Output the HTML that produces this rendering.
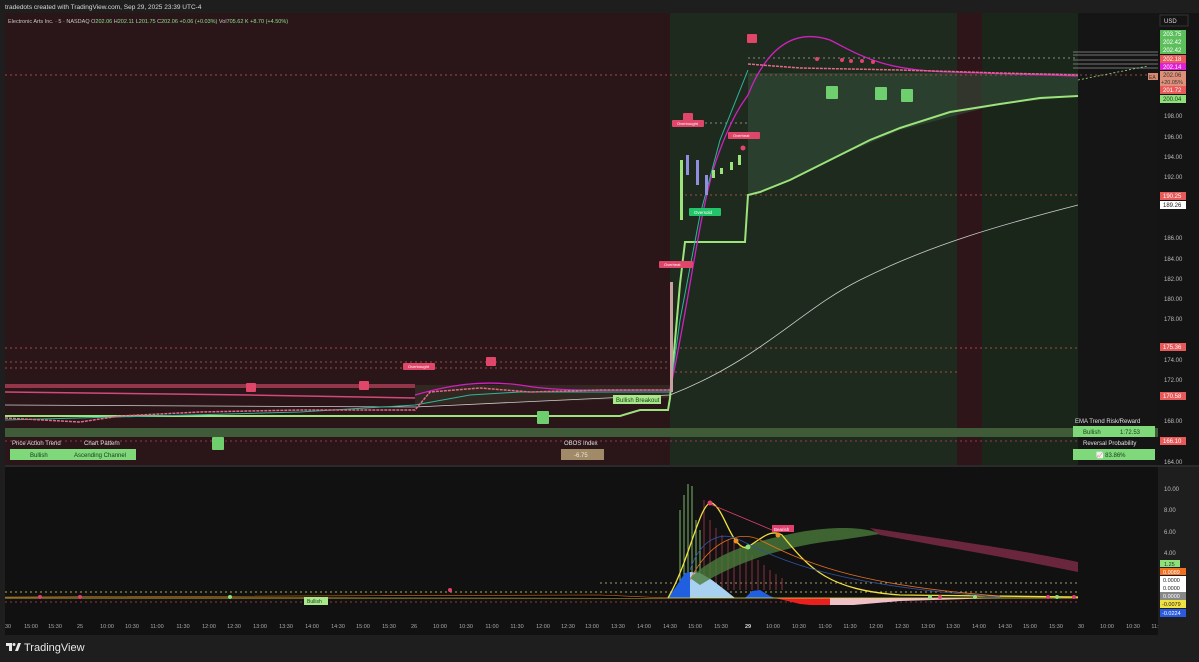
<!DOCTYPE html>
<html><head><meta charset="utf-8"><style>
html,body{margin:0;padding:0;background:#1e1e1e;width:1199px;height:662px;overflow:hidden;font-family:"Liberation Sans",sans-serif}
svg{display:block}
</style></head><body>
<svg width="1199" height="662" viewBox="0 0 1199 662" xmlns="http://www.w3.org/2000/svg" font-family="Liberation Sans, sans-serif">
<rect width="1199" height="662" fill="#1e1e1e"/>
<text x="5" y="9" font-size="6.5" fill="#d8d8d8">tradedots created with TradingView.com, Sep 29, 2025 23:39 UTC-4</text>
<rect x="5" y="13" width="1153" height="452" fill="#141414"/>
<rect x="5" y="13" width="665" height="452" fill="#2a1518"/>
<rect x="670" y="13" width="287" height="452" fill="#1e2a1e"/>
<rect x="957" y="13" width="25" height="452" fill="#2e1519"/>
<rect x="982" y="13" width="96" height="452" fill="#1b261b"/>
<rect x="1078" y="13" width="80" height="452" fill="#151515"/>
<path d="M748 73 L1078 73 L1078 96 L1000 104 L900 130 L830 160 L790 180 L760 193 L748 195 Z" fill="#34503a" opacity="0.55"/>
<path d="M415 385 L670 385 L670 398 L415 405 Z" fill="#3a3a2a" opacity="0.5"/>
<text x="8" y="23" font-size="5.5" fill="#c8c8c8">Electronic Arts Inc. · 5 · NASDAQ <tspan fill="#c8c8c8">O</tspan><tspan fill="#8fe08f">202.06</tspan> H<tspan fill="#8fe08f">202.11</tspan> L<tspan fill="#8fe08f">201.75</tspan> C<tspan fill="#8fe08f">202.06</tspan> <tspan fill="#8fe08f">+0.06 (+0.03%)</tspan> Vol<tspan fill="#8fe08f">705.62 K</tspan> <tspan fill="#8fe08f">+8.70 (+4.50%)</tspan></text>
<g stroke-dasharray="2 3" stroke-width="0.8">
<line x1="5" y1="75" x2="1158" y2="75" stroke="#c06050"/>
<line x1="5" y1="348" x2="1078" y2="348" stroke="#c06050"/>
<line x1="5" y1="362" x2="670" y2="362" stroke="#c06050"/>
<line x1="5" y1="368" x2="670" y2="368" stroke="#c06050"/>
<line x1="670" y1="372" x2="957" y2="372" stroke="#c06050"/>
<line x1="685" y1="195" x2="1078" y2="195" stroke="#c06050"/>
<line x1="5" y1="441" x2="1078" y2="441" stroke="#c04060"/>
<line x1="685" y1="123" x2="748" y2="123" stroke="#aaa"/>
<line x1="748" y1="58" x2="1078" y2="58" stroke="#aaa"/>
</g>
<rect x="5" y="428" width="1153" height="9" fill="#3f5b38"/>
<rect x="5" y="384" width="410" height="4" fill="#c24460" opacity="0.7"/>
<path d="M5 392 L250 395 L415 398" stroke="#d04a7a" stroke-width="1.5" fill="none"/>
<path d="M5 416 L415 416 L620 416 L640 410 L668 410 L670 398 L680 284 L685 242 L745 242 L748 195 L760 192 L790 180 L830 160 L870 140 L900 128 L950 112 L1000 104 L1040 98 L1078 96" stroke="#9be37a" stroke-width="2" fill="none"/>
<path d="M5 405 L415 407 L670 395 C760 360 800 310 860 280 C930 245 1000 225 1078 205" stroke="#cfcfcf" stroke-width="0.8" fill="none"/>
<path d="M415 395 C450 385 480 380 520 385 C560 392 600 390 670 390 C690 300 700 200 720 150 C735 110 745 100 748 95 C770 40 800 30 830 40 C860 55 880 70 950 72 L1078 76" stroke="#d020c0" stroke-width="1.3" fill="none"/>
<path d="M5 420 L300 412 L415 405 L470 395 L520 392 L670 392 L680 320 L700 215 L720 140 L748 70" stroke="#2fb59a" stroke-width="1" fill="none"/>
<path d="M5 418 L80 422 L120 416 L200 412 L300 410 L415 410 L430 392 L480 388 L530 392 L600 390 L670 390" stroke="#e36a8a" stroke-width="1.5" fill="none" stroke-dasharray="3 1"/>
<path d="M748 64 L800 68 L900 70 L1000 73 L1078 75" stroke="#e36a8a" stroke-width="1.5" fill="none" stroke-dasharray="3 1"/>
<rect x="670" y="282" width="3" height="110" fill="#c9a0a0"/>
<rect x="680" y="160" width="3" height="60" fill="#9be37a"/>
<rect x="686" y="155" width="3" height="20" fill="#8f8fe0"/>
<rect x="696" y="160" width="3" height="25" fill="#8f8fe0"/>
<rect x="705" y="175" width="3" height="20" fill="#8f8fe0"/>
<rect x="712" y="170" width="3" height="8" fill="#9be37a"/><rect x="720" y="168" width="3" height="6" fill="#9be37a"/><rect x="730" y="162" width="3" height="8" fill="#9be37a"/><rect x="738" y="155" width="3" height="10" fill="#9be37a"/>
<g fill="#e0456a">
<rect x="246" y="383" width="10" height="9" rx="1"/><rect x="359" y="381" width="10" height="9" rx="1"/><rect x="486" y="357" width="10" height="9" rx="1"/><rect x="683" y="113" width="10" height="9" rx="1"/><rect x="747" y="34" width="10" height="9" rx="1"/>
<rect x="403" y="363" width="32" height="7" rx="1"/><rect x="672" y="120" width="32" height="7" rx="1"/><rect x="728" y="132" width="32" height="7" rx="1"/><rect x="659" y="261" width="34" height="7" rx="1"/>
<circle cx="743" cy="148" r="2.5"/><circle cx="817" cy="59" r="2"/><circle cx="842" cy="60" r="2"/><circle cx="851" cy="61" r="2"/><circle cx="862" cy="61" r="2"/><circle cx="873" cy="62" r="2"/>
</g>
<g font-size="4" fill="#fff"><text x="408" y="368">Overbought</text><text x="677" y="125">Overbought</text><text x="733" y="137">Overheat</text><text x="664" y="266">Overheat</text></g>
<g fill="#6fcf6f">
<rect x="826" y="86" width="12" height="13" rx="1"/><rect x="875" y="87" width="12" height="13" rx="1"/><rect x="901" y="89" width="12" height="13" rx="1"/><rect x="537" y="411" width="12" height="13" rx="1"/><rect x="212" y="437" width="12" height="13" rx="1"/>
</g>
<rect x="689" y="208" width="32" height="8" rx="1" fill="#22c46a"/><text x="694" y="214" font-size="4.5" fill="#fff">Oversold</text>
<rect x="613" y="395" width="48" height="9" fill="#a8e88a"/><text x="616" y="402" font-size="6" fill="#1a3a1a">Bullish Breakout</text>
<text x="12" y="445" font-size="6" fill="#e0e0e0">Price Action Trend</text><text x="84" y="445" font-size="6" fill="#e0e0e0">Chart Pattern</text>
<rect x="10" y="449" width="126" height="11" fill="#7fd87a"/><text x="30" y="457" font-size="6" fill="#1a3a1a">Bullish</text><text x="74" y="457" font-size="6" fill="#1a3a1a">Ascending Channel</text>
<text x="564" y="445" font-size="6" fill="#e0e0e0">OBOS Index</text>
<rect x="561" y="449" width="43" height="11" fill="#a08a68"/><text x="574" y="457" font-size="6" fill="#f0e8d8">-6.75</text>
<text x="1075" y="423" font-size="6" fill="#e0e0e0">EMA Trend   Risk/Reward</text>
<rect x="1073" y="426" width="82" height="11" fill="#7fd87a"/><text x="1083" y="434" font-size="6" fill="#1a3a1a">Bullish</text><text x="1120" y="434" font-size="6" fill="#1a3a1a">1:72.53</text>
<text x="1083" y="445" font-size="6" fill="#e0e0e0">Reversal Probability</text>
<rect x="1073" y="449" width="82" height="11" fill="#7fd87a"/><text x="1096" y="457" font-size="6" fill="#1a3a1a">📈 83.86%</text>
<g stroke="#cfcfcf" stroke-width="0.5"><line x1="1073" y1="52" x2="1158" y2="52"/><line x1="1073" y1="55" x2="1158" y2="55"/><line x1="1073" y1="60" x2="1158" y2="60"/><line x1="1073" y1="64" x2="1158" y2="64"/><line x1="1073" y1="68" x2="1158" y2="68"/></g>
<path d="M1078 80 L1148 66" stroke="#9be37a" stroke-dasharray="2 2" stroke-width="0.8"/>
<rect x="1148" y="73" width="10" height="7" fill="#d98870"/><text x="1149" y="79" font-size="5" fill="#333">EA</text>
<rect x="1158" y="13" width="41" height="453" fill="#141414"/>
<rect x="1160" y="15" width="28" height="11" fill="#141414" stroke="#333"/><text x="1164" y="23" font-size="6" fill="#ddd">USD</text>
<g font-size="6">
<rect x="1160" y="30" width="26" height="8" fill="#5cbf5c"/><text x="1163" y="36" fill="#fff">203.75</text>
<rect x="1160" y="38" width="26" height="8" fill="#5cbf5c"/><text x="1163" y="44" fill="#fff">202.42</text>
<rect x="1160" y="46" width="26" height="8" fill="#5cbf5c"/><text x="1163" y="52" fill="#fff">202.42</text>
<rect x="1160" y="55" width="26" height="8" fill="#e85a5a"/><text x="1163" y="61" fill="#fff">202.18</text>
<rect x="1160" y="63" width="26" height="7" fill="#e020d8"/><text x="1163" y="69" fill="#fff">202.14</text>
<rect x="1160" y="71" width="26" height="15" fill="#e0907a"/><text x="1163" y="77" fill="#333">202.06</text><text x="1161" y="84" fill="#333" font-size="5.5">+20.05%</text>
<rect x="1160" y="86" width="26" height="8" fill="#e85a5a"/><text x="1163" y="92" fill="#fff">201.72</text>
<rect x="1160" y="95" width="26" height="8" fill="#8fe07a"/><text x="1163" y="101" fill="#1a3a1a">200.04</text>
<g fill="#bbb"><text x="1164" y="118">198.00</text><text x="1164" y="139">196.00</text><text x="1164" y="159">194.00</text><text x="1164" y="179">192.00</text><text x="1164" y="240">186.00</text><text x="1164" y="261">184.00</text><text x="1164" y="281">182.00</text><text x="1164" y="301">180.00</text><text x="1164" y="321">178.00</text><text x="1164" y="362">174.00</text><text x="1164" y="382">172.00</text><text x="1164" y="423">168.00</text><text x="1164" y="464">164.00</text></g>
<rect x="1160" y="192" width="26" height="8" fill="#e85a5a"/><text x="1163" y="198" fill="#fff">190.25</text>
<rect x="1160" y="201" width="26" height="8" fill="#fff"/><text x="1163" y="207" fill="#222">189.26</text>
<rect x="1160" y="343" width="26" height="8" fill="#e85a5a"/><text x="1163" y="349" fill="#fff">175.36</text>
<rect x="1160" y="392" width="26" height="8" fill="#e85a5a"/><text x="1163" y="398" fill="#fff">170.58</text>
<rect x="1160" y="437" width="26" height="8" fill="#e85a5a"/><text x="1163" y="443" fill="#fff">166.10</text>
</g>
<rect x="5" y="465" width="1194" height="2" fill="#2a2a2a"/>
<rect x="5" y="467" width="1153" height="138" fill="#111"/>
<g stroke-dasharray="2 3" stroke-width="0.8">
<line x1="5" y1="592" x2="1078" y2="592" stroke="#e0e060"/>
<line x1="5" y1="602" x2="1078" y2="602" stroke="#c04060"/>
<line x1="600" y1="583" x2="1078" y2="583" stroke="#c8c880"/>
</g>
<g stroke-width="1">
<path d="M680 590 V510 M684 590 V495 M688 590 V484 M692 590 V486 M696 590 V520 M700 590 V530" stroke="#7ab86a"/>
<path d="M704 590 V500 M710 590 V520 M716 590 V528 M722 590 V535 M728 590 V540 M734 590 V542 M740 590 V545 M746 590 V550 M752 590 V555 M758 590 V560 M764 590 V565 M770 590 V570 M776 590 V574 M782 590 V578" stroke="#8a3040"/>
</g>
<path d="M668 598 L680 585 L690 572 L700 573 L712 580 L725 590 L735 598 Z" fill="#a8d0f0"/>
<path d="M668 598 L675 588 L685 573 L690 572 L690 598 Z" fill="#2060e0"/>
<path d="M745 598 L752 591 L760 590 L770 596 L775 598 Z" fill="#2060e0"/>
<path d="M775 598 L830 598 L830 607 L800 604 Z" fill="#e82020"/>
<path d="M830 598 L1000 598 L900 601 L830 607 Z" fill="#f0c0c8"/>
<path d="M690 578 C720 550 760 540 800 532 C840 525 870 528 880 534 L840 540 C790 545 740 560 700 585 Z" fill="#4a7a3a" opacity="0.8"/>
<path d="M870 528 C950 540 1020 550 1078 562 L1078 572 C1020 560 950 548 880 535 Z" fill="#7a2a45" opacity="0.85"/>
<path d="M668 598 C690 560 700 500 712 503 C725 510 730 545 746 548 C760 540 770 528 782 535 C810 570 830 590 900 595 L1078 597" stroke="#f0e040" stroke-width="1.3" fill="none"/>
<path d="M690 580 C710 540 740 530 760 540 C800 560 850 585 1000 596" stroke="#e07020" stroke-width="0.8" fill="none"/>
<path d="M690 570 C700 540 720 530 740 540 C780 560 830 585 1000 597" stroke="#3050a0" stroke-width="0.8" fill="none"/>
<path d="M710 504 L772 530" stroke="#e04070" stroke-width="0.8"/>
<path d="M5 598 L1078 598" stroke="#f0e040" stroke-width="0.8"/>
<path d="M5 597 L600 595 L668 598" stroke="#e07020" stroke-width="0.6"/>
<rect x="772" y="525" width="22" height="7" fill="#e04070"/><text x="774" y="531" font-size="4.5" fill="#fff">Bearish</text>
<rect x="304" y="597" width="24" height="8" fill="#a8e88a"/><text x="307" y="603" font-size="5" fill="#1a3a1a">Bullish</text>
<g fill="#e04070"><circle cx="710" cy="503" r="2.5"/><circle cx="40" cy="597" r="2"/><circle cx="80" cy="597" r="2"/><circle cx="450" cy="590" r="2"/><circle cx="1048" cy="597" r="2"/><circle cx="1074" cy="597" r="2"/><circle cx="940" cy="597" r="2"/></g>
<g fill="#8fe07a"><circle cx="748" cy="547" r="2.5"/><circle cx="230" cy="597" r="2"/><circle cx="930" cy="597" r="2"/><circle cx="975" cy="597" r="2"/><circle cx="1057" cy="597" r="2"/></g>
<g fill="#f09020"><circle cx="736" cy="541" r="2.5"/><circle cx="778" cy="535" r="2.5"/></g>
<g font-size="6" fill="#bbb"><text x="1164" y="491">10.00</text><text x="1164" y="512">8.00</text><text x="1164" y="534">6.00</text><text x="1164" y="555">4.00</text></g>
<g font-size="5.5">
<rect x="1160" y="560" width="20" height="7" fill="#8fe07a"/><text x="1164" y="566" fill="#1a3a1a">1.25</text>
<rect x="1160" y="568" width="26" height="7" fill="#f07020"/><text x="1163" y="574" fill="#fff">0.0089</text>
<rect x="1160" y="576" width="26" height="8" fill="#fff"/><text x="1163" y="582" fill="#222">0.0000</text>
<rect x="1160" y="584" width="26" height="8" fill="#fff"/><text x="1163" y="590" fill="#222">0.0000</text>
<rect x="1160" y="592" width="26" height="8" fill="#888"/><text x="1163" y="598" fill="#fff">0.0000</text>
<rect x="1160" y="600" width="26" height="8" fill="#f0e040"/><text x="1162" y="606" fill="#222">-0.0079</text>
<rect x="1160" y="609" width="26" height="8" fill="#2a5ae0"/><text x="1162" y="615" fill="#fff">-0.0224</text>
</g>
<rect x="5" y="605" width="1153" height="30" fill="#111"/>
<g font-size="5.5" fill="#aaa" text-anchor="middle">
<text x="8" y="628">30</text><text x="31" y="628">15:00</text><text x="55" y="628">15:30</text><text x="80" y="628">25</text><text x="107" y="628">10:00</text><text x="132" y="628">10:30</text><text x="157" y="628">11:00</text><text x="183" y="628">11:30</text><text x="209" y="628">12:00</text><text x="234" y="628">12:30</text><text x="260" y="628">13:00</text><text x="286" y="628">13:30</text><text x="312" y="628">14:00</text><text x="338" y="628">14:30</text><text x="363" y="628">15:00</text><text x="389" y="628">15:30</text><text x="414" y="628">26</text><text x="440" y="628">10:00</text><text x="466" y="628">10:30</text><text x="492" y="628">11:00</text><text x="517" y="628">11:30</text><text x="543" y="628">12:00</text><text x="568" y="628">12:30</text><text x="592" y="628">13:00</text><text x="618" y="628">13:30</text><text x="644" y="628">14:00</text><text x="670" y="628">14:30</text><text x="695" y="628">15:00</text><text x="721" y="628">15:30</text><text x="748" y="628" fill="#ddd" font-weight="bold">29</text><text x="773" y="628">10:00</text><text x="799" y="628">10:30</text><text x="825" y="628">11:00</text><text x="850" y="628">11:30</text><text x="876" y="628">12:00</text><text x="902" y="628">12:30</text><text x="928" y="628">13:00</text><text x="953" y="628">13:30</text><text x="979" y="628">14:00</text><text x="1005" y="628">14:30</text><text x="1030" y="628">15:00</text><text x="1056" y="628">15:30</text><text x="1081" y="628">30</text><text x="1107" y="628">10:00</text><text x="1133" y="628">10:30</text><text x="1155" y="628">11:</text>
</g>
<g fill="#e8e8e8"><rect x="6" y="643" width="6" height="3"/><rect x="9" y="643" width="3" height="8"/><circle cx="14" cy="644.5" r="1.5"/><path d="M15 651 L18 643 L21 643 L18 651 Z"/></g>
<text x="24" y="651" font-size="11" fill="#e8e8e8">TradingView</text>
</svg>
</body></html>
